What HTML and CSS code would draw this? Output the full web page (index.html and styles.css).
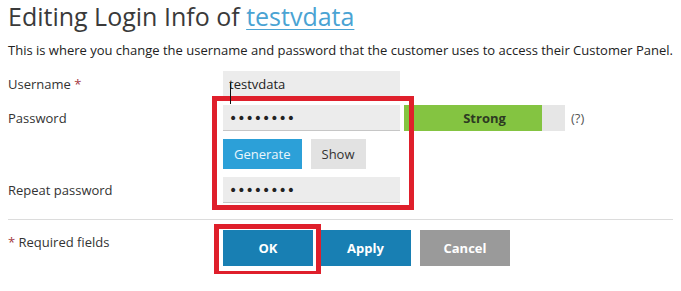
FILE: index.html
```html
<!DOCTYPE html>
<html>
<head>
<meta charset="utf-8">
<link rel="stylesheet" href="styles.css">
</head>
<body>
<h1 class="title">Editing Login Info of <a class="title-link" href="#">testvdata</a></h1>
<p class="desc">This is where you change the username and password that the customer uses to access their Customer Panel.</p>
<div class="form">
  <div class="row">
    <div class="label">Username <span class="req">*</span></div>
    <div class="field"><input class="input" type="text" value="testvdata"></div>
  </div>
  <div class="row">
    <div class="label">Password</div>
    <div class="field">
      <div class="line">
        <input class="input pwd" type="password" value="12345678">
        <div class="meter">
          <div class="meter-fill"></div>
          <div class="meter-text">Strong</div>
        </div>
        <span class="hint">(?)</span>
      </div>
      <div class="line gen-line">
        <button class="btn-gen">Generate</button>
        <button class="btn-show">Show</button>
      </div>
    </div>
  </div>
  <div class="row">
    <div class="label">Repeat password</div>
    <div class="field"><input class="input pwd" type="password" value="12345678"></div>
  </div>
  <div class="sep"></div>
  <div class="row actions">
    <div class="label"><span class="req">*</span> Required fields</div>
    <div class="buttons">
      <button class="btn btn-ok">OK</button>
      <button class="btn btn-apply">Apply</button>
      <button class="btn btn-cancel">Cancel</button>
    </div>
  </div>
  <div class="mark mark-pwd"></div>
  <div class="mark mark-ok"></div>
  <div class="cursor"></div>
</div>
</body>
</html>
```
FILE: styles.css
```css
html, body { background: #fff; }
body {
  margin: 0 8px;
  font-family: "Open Sans", "DejaVu Sans", sans-serif;
  font-size: 13px;
  color: #333;
}
.title {
  margin: 0;
  font-size: 25px;
  font-weight: 400;
  line-height: 33px;
  color: #3a3a3a;
}
.title-link { color: #4aa3d3; text-decoration: underline; text-decoration-thickness: 1px; text-underline-offset: 3px; }
.desc {
  margin: 8px 0 0;
  line-height: 18px;
  color: #222;
}
.form {
  position: relative;
  margin-top: 12px;
}
.row {
  display: grid;
  grid-template-columns: 215px 1fr;
  margin-bottom: 8px;
}
.label {
  line-height: 26px;
  color: #333;
}
.req { color: #a3393f; }
.field { display: flex; flex-direction: column; gap: 8px; }
.line { display: flex; align-items: center; }
.buttons { display: flex; align-items: flex-start; }
.input {
  box-sizing: border-box;
  width: 177px;
  height: 26px;
  margin: 0;
  padding: 0 6px;
  border: 0;
  border-bottom: 1px solid #c6c6c6;
  background: #ececec;
  font-family: "Open Sans", sans-serif;
  font-size: 13px;
  color: #222;
  outline: none;
}
.pwd {
  font-family: "DejaVu Sans", sans-serif;
  font-size: 14px;
  letter-spacing: 0;
}
.meter {
  display: grid;
  width: 161px;
  height: 26px;
  margin-left: 4px;
  background: #e6e6e6;
}
.meter-fill, .meter-text { grid-area: 1 / 1; }
.meter-fill { width: 138px; background: #84c441; }
.meter-text {
  text-align: center;
  line-height: 26px;
  font-weight: 700;
  color: #2d3a22;
}
.hint { margin-left: 6px; color: #555; }
.gen-line { gap: 9px; }
.btn-gen, .btn-show {
  height: 30px;
  padding: 0 11px;
  border: 0;
  font-family: "Open Sans", sans-serif;
  font-size: 13px;
}
.btn-gen { background: #2ca0d8; color: #eaf6fc; }
.btn-show { background: #e2e2e2; color: #333; }
.sep {
  height: 1px;
  margin: 16px -8px 10px 0;
  background: #dcdcdc;
}
.actions .label { line-height: 24px; }
.btn {
  width: 90px;
  height: 36px;
  margin: 0;
  border: 0;
  font-family: "Open Sans", sans-serif;
  font-size: 13px;
  font-weight: 700;
  color: #fff;
}
.btn-ok { background: #187fb3; }
.btn-apply { background: #187fb3; margin-left: 7px; width: 91px; }
.btn-cancel { background: #9a9a9a; margin-left: 9px; }
.mark {
  position: absolute;
  border: 5px solid #df1f2b;
  box-sizing: border-box;
}
.mark-pwd { left: 204px; top: 25px; width: 202px; height: 114px; }
.mark-ok { left: 206px; top: 153px; width: 107px; height: 52px; }
.cursor {
  position: absolute;
  left: 222px;
  top: 12px;
  width: 1px;
  height: 21px;
  background: #111;
}
```
